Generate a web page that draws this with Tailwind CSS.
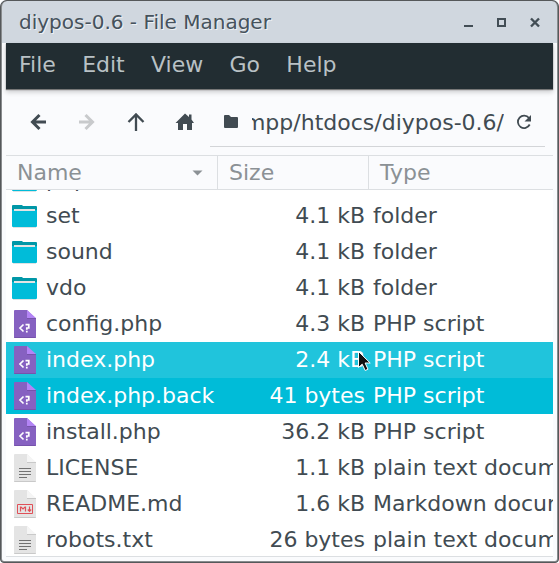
<!DOCTYPE html>
<html lang="en">
<head>
<meta charset="utf-8">
<title>diypos-0.6 - File Manager</title>
<script src="https://cdn.jsdelivr.net/npm/@tailwindcss/browser@4"></script>
</head>
<body class="w-[559px] h-[563px] overflow-hidden bg-white font-['DejaVu_Sans',sans-serif] text-[22px] text-[#414b52] whitespace-nowrap">
<svg class="hidden">
  <symbol id="folder" viewBox="0 0 26 24"><path fill="#0097a7" d="M1 1h9l1 1h13q1 0 1 1v10H0V2q0-1 1-1z"/><path fill="#e4e4e4" d="M2 5h21v4H2z"/><path fill="#00bcd9" d="M0 6h2v1h21v-1h2v16q0 1-1 1H1q-1 0-1-1z"/><path fill="#bac5c7" d="M1 23h23v.5H1z"/></symbol>
  <symbol id="php" viewBox="0 0 26 30"><path fill="#8661c1" d="M3 1h12l9 9v18q0 1-1 1H3q-1 0-1-1V2q0-1 1-1z"/><path fill="#7653ab" d="M15 9h9v1h-9zM2 28h22q0 1-1 1H3q-1 0-1-1z"/><path fill="#b384f5" d="M15 1l9 8h-9z"/><path fill="none" stroke="#fff" stroke-width="1.7" d="M11.500 15.500l-3.500 3.500 3.500 3.500M13.500 15.700h3.300v3.300h-2v1.700M14.800 21.700v1.700"/></symbol>
  <symbol id="doc" viewBox="0 0 26 30"><path fill="#e4e4e4" d="M3 1h12l9 9v18q0 1-1 1H3q-1 0-1-1V2q0-1 1-1z"/><path fill="#c9c9c9" d="M15 9h9v1h-9zM2 28h22q0 1-1 1H3q-1 0-1-1z"/><path fill="#f5f5f5" d="M15 1l9 8h-9z"/></symbol>
  <symbol id="txt" viewBox="0 0 26 30"><use href="#doc"/><path fill="#727272" d="M7 15h12v1H7zM7 18h12v1H7zM7 21h12v1H7zM7 24h8v1H7z"/></symbol>
  <symbol id="md" viewBox="0 0 26 30"><use href="#doc"/><path fill="none" stroke="#e05058" d="M5.500 15.500h15v9h-15z"/><path fill="none" stroke="#e05058" stroke-width="1.200" d="M8.500 22.500v-4.500h.5l2 2 2-2h.5v4.500M17.500 17.500v4M15.800 20.500l1.700 1.800 1.700-1.800"/></symbol>
</svg>
<div class="relative w-[559px] h-[563px] rounded-t-[6px] rounded-b-[4px] overflow-hidden bg-[#fafbfd] flex flex-col">
  <header class="h-[43px] shrink-0 bg-[#d0d7df] flex items-center justify-between pl-[19px] pr-[18px] text-[#46525c]">
    <h1 class="text-[20px] [text-shadow:1px_1px_0_#eef1f4]">diypos-0.6 - File Manager</h1>
    <svg class="w-[77px] h-[12px] mt-[2px]" viewBox="0 0 77 12" fill="none" stroke="#424d55" stroke-width="2"><path d="M0 9h9M34 2h7v7h-7z"/><path stroke-width="2.400" d="M67 1.500l8 8M75 1.500l-8 8"/></svg>
  </header>
  <nav class="h-[46px] shrink-0 mx-[6px] bg-[#222d32] text-[#b9c1c5] flex items-center pl-[13px] pb-[4px] gap-[26.3px] shadow-[0_1px_1px_#777,0_3px_5px_#0003] relative">
    <span>File</span><span>Edit</span><span>View</span><span>Go</span><span>Help</span>
  </nav>
  <div class="h-[66px] shrink-0 pl-[30px] pr-[14px] flex">
    <svg class="w-[180px] h-[66px] shrink-0" viewBox="30 89 180 66" fill="none" stroke="#414b52" stroke-width="3"><path d="M33 122h13M39.500 115l-7 7 7 7"/><path stroke="#c8cacc" d="M79 122h13M85.500 115l7 7-7 7"/><path stroke-width="2.300" d="M136 131v-16M128.500 122l7.500-7.500 7.500 7.500"/><path fill="#414b52" stroke="none" d="M185 113.500l4 3.500v-2.500h2.500v5l2.500 3.500h-2v7h-5v-6h-4v6h-5v-7h-2.500z"/></svg>
    <div class="flex-1 h-[58px] border-b border-[#d3d5d8] flex items-center min-w-0 pt-[8px]">
      <svg class="w-[42px] h-[20px] shrink-0" viewBox="210 112 42 20"><path fill="#414b52" d="M225 115h4l2 2h6q1 0 1 1v9q0 1-1 1h-12q-1 0-1-1v-11q0-1 1-1z"/></svg>
      <div class="w-[252px] overflow-hidden flex justify-end shrink-0 pt-[2px]"><span>lampp/htdocs/diypos-0.6/</span></div>
      <svg class="w-[30px] h-[20px] shrink-0 ml-[1px]" viewBox="505 112 30 20"><path fill="none" stroke="#414b52" stroke-width="1.800" d="M529 118a6.200 6.200 0 1 0 .7 6.500"/><path fill="#414b52" d="M531 115v6.500h-6.500z"/></svg>
    </div>
  </div>
  <div class="h-[35px] shrink-0 mx-[6px] border-y border-[#dcdfe2] flex items-center text-[#8b9195]">
    <div class="w-[212px] h-full border-r border-[#dcdfe2] pl-[11px] pr-[14px] flex items-center justify-between"><span>Name</span><svg class="w-[11px] h-[6px]" viewBox="0 0 11 6"><path fill="#8b9195" d="M.5.500h10L5.500 5.500z"/></svg></div>
    <div class="w-[151px] h-full border-r border-[#dcdfe2] pl-[11px] flex items-center">Size</div>
    <div class="pl-[11px]">Type</div>
  </div>
  <main class="h-[367px] shrink-0 mx-[6px] overflow-hidden bg-white border-b border-[#dcdfe2]">
    <div id="rows" class="-mt-[28px]"></div>
  </main>
  <svg class="absolute left-[357px] top-[350px] w-[15px] h-[23px]" viewBox="0 0 15 23"><path fill="#111" stroke="#fff" stroke-width="1" d="M1.500 1.500v16l3.700-3.300 3 6.300 2.800-1.300-2.900-6.200h5.100z"/></svg>
  <div class="absolute inset-0 border-[2px] border-t-[1px] border-[#898c8e] rounded-t-[7px] rounded-b-[4px] pointer-events-none"></div>
  <div class="absolute inset-0 border border-[#55585a] rounded-t-[7px] rounded-b-[4px] pointer-events-none"></div>
</div>
<script>
const files = [
  ['folder', 'php', '4.1 kB', 'folder'],
  ['folder', 'set', '4.1 kB', 'folder'],
  ['folder', 'sound', '4.1 kB', 'folder'],
  ['folder', 'vdo', '4.1 kB', 'folder'],
  ['php', 'config.php', '4.3 kB', 'PHP script'],
  ['php', 'index.php', '2.4 kB', 'PHP script', 'bg-[#20c4dc] text-white'],
  ['php', 'index.php.back', '41 bytes', 'PHP script', 'bg-[#00bcd8] text-white'],
  ['php', 'install.php', '36.2 kB', 'PHP script'],
  ['txt', 'LICENSE', '1.1 kB', 'plain text document'],
  ['md', 'README.md', '1.6 kB', 'Markdown document'],
  ['txt', 'robots.txt', '26 bytes', 'plain text document'],
];
document.getElementById('rows').innerHTML = files.map(([icon, name, size, type, cls = '']) => `
  <div class="h-[36px] flex items-center ${cls}">
    <svg class="${icon === 'folder' ? 'w-[26px] h-[24px] ml-[6px]' : 'w-[26px] h-[30px] ml-[6px]'} shrink-0"><use href="#${icon}"/></svg>
    <div class="w-[190px] pl-[8px] pb-[2px] shrink-0">${name}</div>
    <div class="w-[137px] pb-[2px] text-right shrink-0">${size}</div>
    <div class="pl-[8px] pb-[2px]">${type}</div>
  </div>`).join('');
</script>
</body>
</html>
